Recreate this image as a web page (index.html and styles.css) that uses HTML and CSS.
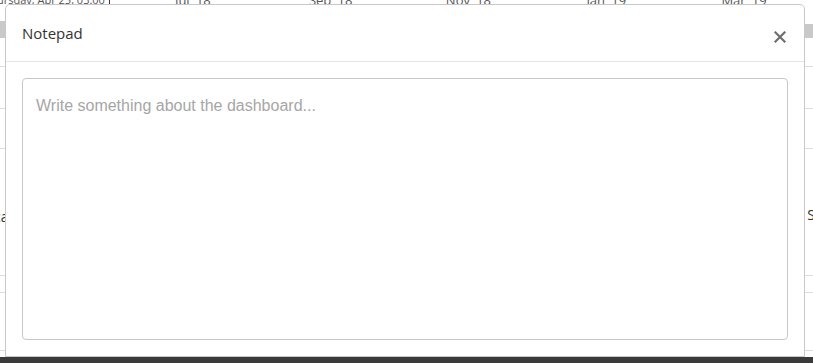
FILE: index.html
```html
<!DOCTYPE html>
<html>
<head>
<meta charset="utf-8">
<link rel="stylesheet" href="styles.css">
</head>
<body>
<div class="page">
  <div class="axis">
    <span class="tip">ursday, Apr 25, 03:00</span>
    <span class="tick t1">Jul '18</span>
    <span class="tick">Sep '18</span>
    <span class="tick">Nov '18</span>
    <span class="tick">Jan '19</span>
    <span class="tick">Mar '19</span>
  </div>
  <div class="bars">
    <div class="bar bar-l"></div>
    <div class="bar bar-r"></div>
  </div>
  <div class="rows">
    <div class="row r1"></div>
    <div class="row r2"></div>
    <div class="row r3"></div>
    <div class="row r4"><span class="cell-l">ca</span><span class="cell-r">S</span></div>
    <div class="row r5"></div>
    <div class="row r6"></div>
  </div>
  <div class="footer"></div>
</div>

<div class="modal">
  <div class="modal-header">
    <h4 class="modal-title">Notepad</h4>
    <button class="close" aria-label="Close">
      <svg width="12" height="12" viewBox="0 0 12 12"><path d="M1.5 1.5 L10.5 10.5 M10.5 1.5 L1.5 10.5" stroke="#6f6f6f" stroke-width="2.2" stroke-linecap="square"/></svg>
    </button>
  </div>
  <div class="modal-body">
    <textarea class="note" placeholder="Write something about the dashboard..."></textarea>
  </div>
</div>
</body>
</html>
```

FILE: styles.css
```css
* { box-sizing: border-box; }
html, body { margin: 0; padding: 0; }
body {
  width: 813px;
  height: 363px;
  overflow: hidden;
  background: #fff;
  font-family: "Open Sans", "Liberation Sans", sans-serif;
}
.page {
  display: flex;
  flex-direction: column;
  height: 363px;
}
.axis {
  display: flex;
  align-items: flex-end;
  margin-top: -7px;
  height: 14px;
  font-size: 13px;
  color: #555;
  line-height: 14px;
  white-space: nowrap;
}
.tip {
  font-size: 11px;
  margin-left: -3px;
  padding: 0 4px 0 0;
  border-right: 1px solid #333;
  width: 116px;
  text-align: right;
}
.tick { width: 143px; text-align: center; }
.t1 { margin-left: 14px; }
.bars {
  display: flex;
  justify-content: space-between;
  margin-top: 14px;
  height: 17px;
}
.bar { background: #c9c9c9; }
.bar-l { width: 6px; height: 17px; }
.bar-r { width: 9px; height: 14px; margin-top: 3px; }
.rows { display: flex; flex-direction: column; }
.row { border-bottom: 1px solid #ddd; position: relative; }
.r1 { height: 29px; }
.r2 { height: 42px; }
.r3 { height: 40px; }
.r4 { height: 127px; display: flex; justify-content: space-between; align-items: center; font-size: 14px; color: #333; }
.cell-l { margin-left: -6px; margin-top: 8px; }
.cell-r { margin-right: -2px; margin-top: 4px; }
.r5 { height: 17px; }
.r6 { height: 58px; }
.footer {
  margin-top: auto;
  height: 6px;
  background: #3a3a3a;
}
.modal {
  position: fixed;
  top: 4px;
  left: 5px;
  width: 800px;
  height: 353px;
  background: #fff;
  border: 1px solid #c8c8c8;
  border-radius: 5px 5px 0 0;
  display: flex;
  flex-direction: column;
}
.modal-header {
  display: flex;
  align-items: center;
  justify-content: space-between;
  height: 57px;
  padding: 0 16px 0 16px;
  border-bottom: 1px solid #e5e5e5;
}
.modal-title {
  margin: 0;
  font-weight: 400;
  font-size: 15px;
  color: #333;
  margin-top: 0;
}
.close {
  background: none;
  border: 0;
  padding: 0;
  width: 14px;
  height: 14px;
  display: flex;
  align-items: center;
  justify-content: center;
  margin-top: 8px;
  margin-right: 1px;
}
.modal-body {
  flex: 1;
  padding: 16px 16px 16px 16px;
  display: flex;
}
.note {
  flex: 1;
  resize: none;
  border: 1px solid #c7c7c7;
  border-radius: 4px;
  padding: 18px 13px 16px;
  font-family: "Liberation Sans", Arial, sans-serif;
  font-size: 16px;
  color: #333;
  outline: none;
}
.note::placeholder { color: #a6a6a6; }
```
